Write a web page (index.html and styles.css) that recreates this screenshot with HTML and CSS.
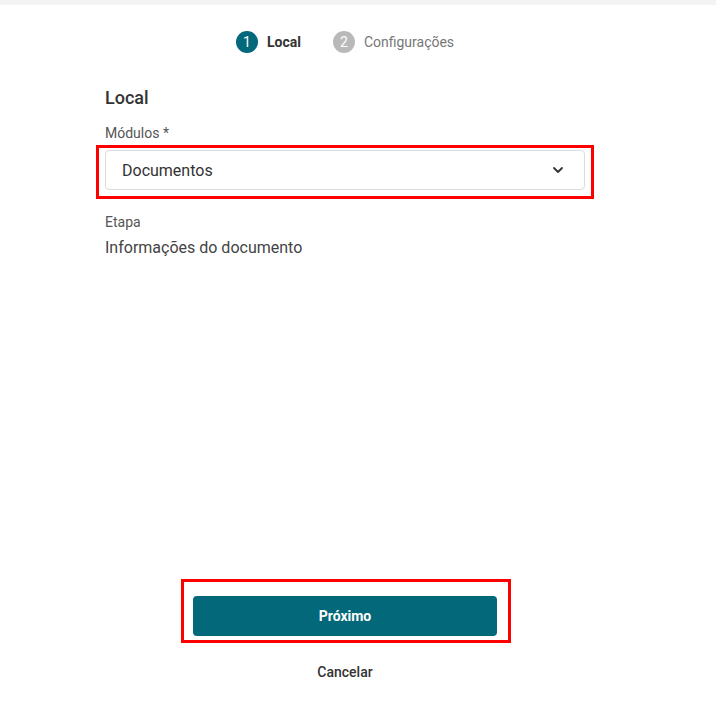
FILE: index.html
```html
<!DOCTYPE html>
<html lang="pt-BR">
<head>
<meta charset="utf-8">
<link rel="stylesheet" href="styles.css">
</head>
<body>
<div class="topbar"></div>
<div class="page">
  <div class="stepper">
    <div class="step active"><span class="num">1</span><span class="label">Local</span></div>
    <div class="step"><span class="num">2</span><span class="label">Configurações</span></div>
  </div>
  <div class="form">
    <h2 class="title">Local</h2>
    <div class="field-label">Módulos *</div>
    <div class="select">
      <span class="select-value">Documentos</span>
      <svg class="chevron" width="12" height="8" viewBox="0 0 12 8"><path d="M2 2 L6 6 L10 2" fill="none" stroke="#333" stroke-width="1.8" stroke-linecap="round" stroke-linejoin="round"/></svg>
    </div>
    <div class="info-label">Etapa</div>
    <div class="info-value">Informações do documento</div>
  </div>
  <div class="spacer"></div>
  <div class="footer">
    <button class="primary">Próximo</button>
    <button class="link">Cancelar</button>
  </div>
</div>
<div class="mark mark-select"></div>
<div class="mark mark-button"></div>
</body>
</html>
```
FILE: styles.css
```css
* { box-sizing: border-box; }
html, body { margin: 0; padding: 0; }
body {
  background: #fff;
  font-family: Roboto, "Liberation Sans", Arial, sans-serif;
  color: #333;
  width: 716px;
  height: 703px;
  position: relative;
  overflow: hidden;
}
.topbar { height: 5px; background: #f3f3f3; }
.page {
  width: 690px;
  height: 698px;
  display: flex;
  flex-direction: column;
  align-items: center;
}
.stepper {
  margin-top: 26px;
  display: flex;
  gap: 32px;
  height: 22px;
}
.step { display: flex; align-items: center; gap: 9px; }
.num {
  width: 22px; height: 22px; border-radius: 50%;
  background: #b9b9b9; color: #fff;
  font-size: 14px; line-height: 22px; text-align: center;
}
.label { font-size: 14px; line-height: 22px; color: #777; }
.step.active .num { background: #03687a; }
.step.active .label { color: #333; font-weight: 700; }
.form { width: 480px; display: flex; flex-direction: column; }
.title {
  margin: 33px 0 0; font-size: 18px; line-height: 24px; font-weight: 500; color: #333;
}
.field-label { margin-top: 13px; font-size: 14px; line-height: 20px; color: #555; }
.select {
  margin-top: 7px; height: 40px;
  border: 1px solid #dcdcdc; border-radius: 4px;
  display: flex; align-items: center; justify-content: space-between;
  padding: 0 20px 0 16px;
}
.select-value { font-size: 16px; color: #333; }
.chevron { display: block; }
.info-label { margin-top: 22px; font-size: 14px; line-height: 20px; color: #555; }
.info-value { font-size: 16px; line-height: 24px; color: #444; margin-top: 4px; }
.spacer { flex: 1; }
.footer { display: flex; flex-direction: column; align-items: center; padding-bottom: 21px; }
.primary {
  width: 304px; height: 40px; border: none; border-radius: 4px;
  background: #03687a; color: #fff;
  font-family: inherit; font-size: 14px; font-weight: 700;
}
.link {
  margin-top: 26px; background: none; border: none; padding: 0;
  font-family: inherit; font-size: 14px; line-height: 20px; font-weight: 500; color: #333;
}
.mark { position: absolute; border: 3px solid #ff0000; }
.mark-select { left: 96px; top: 145px; width: 498px; height: 54px; }
.mark-button { left: 181px; top: 579px; width: 330px; height: 64px; }
```
